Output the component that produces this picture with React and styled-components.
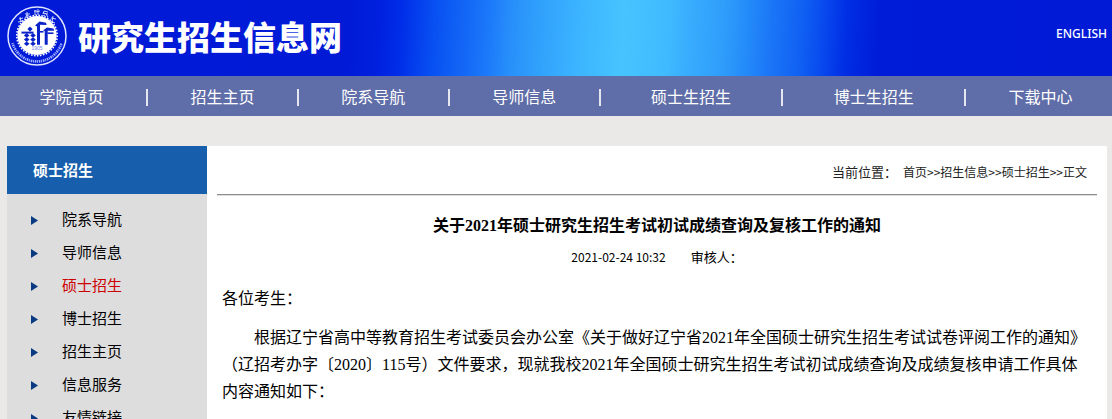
import React from "react";
import styled, { createGlobalStyle } from "styled-components";

const GlobalStyle = createGlobalStyle`
  * {
    box-sizing: border-box;
  }

  body {
    margin: 0;
    background-color: #eae9e8;
    color: #000;
    font-family: "Noto Sans CJK SC", sans-serif;
    font-size: 16px;
    text-spacing-trim: space-all;
  }

  a {
    color: inherit;
    text-decoration: none;
  }
`;

const HeaderBox = styled.header`
  display: flex;
  align-items: center;
  height: 76px;
  padding: 0 5px 4px 7px;
  color: #fff;
  background: linear-gradient(
    93deg,
    #001ad8 0%,
    #001ad6 31%,
    #0020de 34%,
    #002de8 36%,
    #0850f2 39%,
    #1468f6 42%,
    #1c7afa 44%,
    #2890fa 46%,
    #32a4fc 49%,
    #3cb4ff 52%,
    #46c4ff 56%,
    #40baff 60%,
    #38acfd 62%,
    #2f9dfb 65%,
    #248cf9 67%,
    #1c78f7 69%,
    #1060f3 72%,
    #0848ee 74%,
    #002ee4 76%,
    #001cd8 79%,
    #001ad6 100%
  );
`;

const LogoLink = styled.a`
  display: flex;
  align-items: center;
  gap: 11px;
`;

const LogoSvg = styled.svg`
  width: 60px;
  height: 60px;
`;

const SiteTitle = styled.h1`
  margin: 0;
  font-size: 33px;
  font-weight: 900;
  line-height: 40px;
`;

const EnglishLink = styled.a`
  margin-left: auto;
  padding-bottom: 4px;
  font-family: "Noto Sans", sans-serif;
  font-size: 12px;
  font-weight: 500;
  line-height: 16px;
`;

const NavBox = styled.nav`
  display: flex;
  align-items: center;
  height: 40px;
  color: #fff;
  background-color: #5f6ea8;
`;

const NavLink = styled.a`
  flex: ${(props) => (props.$wide ? 11 : 9)} 1 0;
  text-align: center;
  line-height: 40px;
`;

const NavLine = styled.span`
  width: 2px;
  height: 17px;
  margin: 2px 3px 0;
  background-color: #e4e6f0;
`;

const ContentBox = styled.div`
  display: grid;
  grid-template-columns: 200px 1fr;
  margin: 30px 5px 0 7px;
`;

const SideBox = styled.aside`
  background-color: #ddd;
`;

const SideTitle = styled.h2`
  margin: 0;
  padding-left: 26px;
  color: #fff;
  background-color: #175fac;
  font-size: 15px;
  line-height: 48px;
`;

const SideList = styled.ul`
  margin: 0;
  padding: 8px 0;
  list-style: none;
`;

const SideLink = styled.a`
  display: flex;
  align-items: center;
  gap: 24px;
  padding-left: 24px;
  font-size: 15px;
  line-height: 33px;
  && {
    color: ${(props) => (props.$active ? "#c00" : "#000")};
  }
`;

const ArrowSvg = styled.svg`
  width: 7px;
  height: 9px;
  margin-top: 3px;
`;

const MainBox = styled.main`
  padding: 10px;
  background-color: #fff;
`;

const PathBox = styled.div`
  display: flex;
  justify-content: flex-end;
  gap: 6px;
  padding: 0 10px;
  color: #222;
  font-size: 13px;
  line-height: 32px;
`;

const PathLinks = styled.span`
  font-size: 12px;
`;

const Line = styled.hr`
  height: 2px;
  margin: 6px 0 0;
  border: 0;
  border-top: 1px solid #8c8c8c;
  background-color: #ddd;
`;

const ArticleBox = styled.article`
  padding: 15px 5px;
`;

const ArticleTitle = styled.h3`
  margin: 0;
  font-family: "Liberation Serif", "Noto Sans CJK SC", serif;
  font-size: 16px;
  line-height: 30px;
  text-align: center;
`;

const ArticleInfo = styled.div`
  display: flex;
  justify-content: center;
  gap: 25px;
  font-size: 13px;
  line-height: 32px;
`;

const ArticleDate = styled.time`
  font-size: 12px;
`;

const Paragraph = styled.p`
  margin: 12px 0;
  font-family: "Liberation Serif", "Noto Sans CJK SC", serif;
  line-height: 27px;
  text-indent: ${(props) => (props.$indent ? "2em" : "0")};
`;

const navData = [
  "学院首页",
  "招生主页",
  "院系导航",
  "导师信息",
  "硕士生招生",
  "博士生招生",
  "下载中心",
];

const sideData = [
  "院系导航",
  "导师信息",
  "硕士招生",
  "博士招生",
  "招生主页",
  "信息服务",
  "友情链接",
];

function Logo() {
  return (
    <LogoSvg viewBox="0 0 60 60" aria-hidden="true">
      <circle cx="30" cy="30" r="29" fill="none" stroke="#dfe4ff" strokeWidth="1.5" />
      <circle cx="30" cy="29.5" r="19.6" fill="#fff" />
      <circle
        cx="30"
        cy="29.5"
        r="20.2"
        fill="none"
        stroke="#fff"
        strokeWidth="1.6"
        strokeDasharray="1.6 1.4"
      />
      {/* upper ring */}
      <g fill="none" stroke="#dfe4ff" strokeWidth=".9">
        <path d="M12 13l4 -1M13 11l1 5M11 16l6-1M15 14l1 3" />
        <path d="M18 8l5 0M20 6l0 6M18 12l2-3 3 2" />
        <path d="M27 5l3 0M28 4v5M31 3v6M29 6l4-1" />
        <path d="M37 5l4 1M36 7l5 1M38 9l-2 1M39 8l2 3M37 5l-1 3" />
        <path d="M46 10l-1 6M44 12l5 1M43 15l5 2" />
      </g>
      {/* lower ring */}
      <path
        d="M5.5 37A25.5 25.5 0 0 0 54.5 37"
        fill="none"
        stroke="#9fb0ff"
        strokeWidth="2.6"
        strokeDasharray="1 .8 1.6 .7"
      />
      {/* emblem */}
      <g fill="#0a22c8">
        <path d="M23 20.5l2.6 2.6-2.6 2.6-2.6-2.6z" />
        <path d="M14.5 25.6h12v2h-12z" />
        <path d="M19.7 27l2.8 2.4-2.8 2.4-2.8-2.4zM26 27l2.8 2.4-2.8 2.4-2.8-2.4z" />
        <path d="M19.7 31.2l2.8 2.4-2.8 2.4-2.8-2.4zM26 31.2l2.8 2.4-2.8 2.4-2.8-2.4z" />
        <path d="M19.7 35.4l2.8 2.3-2.8 2.3-2.8-2.3zM26 35.4l2.8 2.3-2.8 2.3-2.8-2.3z" />
        <path d="M28 19.5l4.5-4 6.5 1.2.6 2.4-6.6-.4v20h-3V20.5z" />
        <path d="M33 25h3.5v1.6H33z" />
        <path d="M36 24.5l4-3 6.5 1 .6 2.2h-6.4v14h-3V25z" />
        <path d="M40.5 26.4h6v1.6h-6z" />
      </g>
      <text x="30" y="44" fill="#6f7ee6" fontFamily="Liberation Sans, sans-serif" fontSize="5" textAnchor="middle">
        1905
      </text>
    </LogoSvg>
  );
}

function Arrow() {
  return (
    <ArrowSvg viewBox="0 0 7 9" aria-hidden="true">
      <path d="M0 0L7 4.5L0 9Z" fill="#0a3a82" />
    </ArrowSvg>
  );
}

export default function App() {
  return (
    <>
      <GlobalStyle />
      <HeaderBox>
        <LogoLink href="#">
          <Logo />
          <SiteTitle>研究生招生信息网</SiteTitle>
        </LogoLink>
        <EnglishLink href="#">ENGLISH</EnglishLink>
      </HeaderBox>
      <NavBox>
        {navData.map((name, index) => {
          return (
            <React.Fragment key={name}>
              {index > 0 && <NavLine />}
              <NavLink href="#" $wide={name.length > 4}>
                {name}
              </NavLink>
            </React.Fragment>
          );
        })}
      </NavBox>
      <ContentBox>
        <SideBox>
          <SideTitle>硕士招生</SideTitle>
          <SideList>
            {sideData.map((name) => {
              return (
                <li key={name}>
                  <SideLink href="#" $active={name === "硕士招生"}>
                    <Arrow />
                    {name}
                  </SideLink>
                </li>
              );
            })}
          </SideList>
        </SideBox>
        <MainBox>
          <PathBox>
            <span>当前位置：</span>
            <PathLinks>
              <a href="#">首页</a>&gt;&gt;<a href="#">招生信息</a>&gt;&gt;
              <a href="#">硕士招生</a>&gt;&gt;正文
            </PathLinks>
          </PathBox>
          <Line />
          <ArticleBox>
            <ArticleTitle>
              关于2021年硕士研究生招生考试初试成绩查询及复核工作的通知
            </ArticleTitle>
            <ArticleInfo>
              <ArticleDate>2021-02-24 10:32</ArticleDate>
              <span>审核人：</span>
            </ArticleInfo>
            <Paragraph>各位考生：</Paragraph>
            <Paragraph $indent>
              根据辽宁省高中等教育招生考试委员会办公室《关于做好辽宁省2021年全国硕士研究生招生考试试卷评阅工作的通知》（辽招考办字〔2020〕115号）文件要求，现就我校2021年全国硕士研究生招生考试初试成绩查询及成绩复核申请工作具体内容通知如下：
            </Paragraph>
          </ArticleBox>
        </MainBox>
      </ContentBox>
    </>
  );
}
